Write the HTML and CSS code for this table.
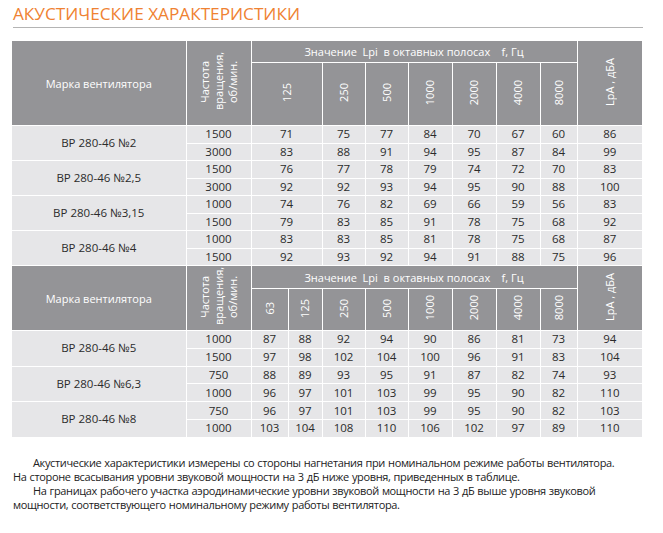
FILE: index.html
```html
<!DOCTYPE html>
<html lang="ru">
<head>
	<meta charset="UTF-8">
	<title>Акустические характеристики</title>
	<link rel="stylesheet" href="styles.css">
</head>
<body>
	<div id="main">
		<h1 class="title">АКУСТИЧЕСКИЕ ХАРАКТЕРИСТИКИ</h1>

		<table class="spec">
			<colgroup>
				<col style="width:174px"><col style="width:65px"><col style="width:71px">
				<col style="width:43px"><col style="width:43px"><col style="width:44px">
				<col style="width:44px"><col style="width:44px"><col style="width:37px"><col style="width:65px">
			</colgroup>
			<thead>
				<tr class="h1">
					<th rowspan="2">Марка вентилятора</th>
					<th rowspan="2"><div class="vert multi">Частота вращения, об/мин.</div></th>
					<th colspan="7">Значение&nbsp; Lpi&nbsp; в октавных полосах &nbsp;&nbsp; f, Гц</th>
					<th rowspan="2"><div class="vert">LpA , дБА</div></th>
				</tr>
				<tr class="h2">
					<th><div class="vert">125</div></th>
					<th><div class="vert">250</div></th>
					<th><div class="vert">500</div></th>
					<th><div class="vert">1000</div></th>
					<th><div class="vert">2000</div></th>
					<th><div class="vert">4000</div></th>
					<th><div class="vert">8000</div></th>
				</tr>
			</thead>
			<tbody>
				<tr><td rowspan="2">ВР 280-46 №2</td><td>1500</td><td>71</td><td>75</td><td>77</td><td>84</td><td>70</td><td>67</td><td>60</td><td>86</td></tr>
				<tr><td>3000</td><td>83</td><td>88</td><td>91</td><td>94</td><td>95</td><td>87</td><td>84</td><td>99</td></tr>
				<tr><td rowspan="2">ВР 280-46 №2,5</td><td>1500</td><td>76</td><td>77</td><td>78</td><td>79</td><td>74</td><td>72</td><td>70</td><td>83</td></tr>
				<tr><td>3000</td><td>92</td><td>92</td><td>93</td><td>94</td><td>95</td><td>90</td><td>88</td><td>100</td></tr>
				<tr><td rowspan="2">ВР 280-46 №3,15</td><td>1000</td><td>74</td><td>76</td><td>82</td><td>69</td><td>66</td><td>59</td><td>56</td><td>83</td></tr>
				<tr><td>1500</td><td>79</td><td>83</td><td>85</td><td>91</td><td>78</td><td>75</td><td>68</td><td>92</td></tr>
				<tr><td rowspan="2">ВР 280-46 №4</td><td>1000</td><td>83</td><td>83</td><td>85</td><td>81</td><td>78</td><td>75</td><td>68</td><td>87</td></tr>
				<tr><td>1500</td><td>92</td><td>93</td><td>92</td><td>94</td><td>91</td><td>88</td><td>75</td><td>96</td></tr>
			</tbody>
		</table>

		<table class="spec second">
			<colgroup>
				<col style="width:174px"><col style="width:65px"><col style="width:37px"><col style="width:34px">
				<col style="width:43px"><col style="width:43px"><col style="width:44px">
				<col style="width:44px"><col style="width:44px"><col style="width:37px"><col style="width:65px">
			</colgroup>
			<thead>
				<tr class="h1">
					<th rowspan="2">Марка вентилятора</th>
					<th rowspan="2"><div class="vert multi">Частота вращения, об/мин.</div></th>
					<th colspan="8">Значение&nbsp; Lpi&nbsp; в октавных полосах &nbsp;&nbsp; f, Гц</th>
					<th rowspan="2"><div class="vert">LpA , дБА</div></th>
				</tr>
				<tr class="h2">
					<th><div class="vert">63</div></th>
					<th><div class="vert">125</div></th>
					<th><div class="vert">250</div></th>
					<th><div class="vert">500</div></th>
					<th><div class="vert">1000</div></th>
					<th><div class="vert">2000</div></th>
					<th><div class="vert">4000</div></th>
					<th><div class="vert">8000</div></th>
				</tr>
			</thead>
			<tbody>
				<tr><td rowspan="2">ВР 280-46 №5</td><td>1000</td><td>87</td><td>88</td><td>92</td><td>94</td><td>90</td><td>86</td><td>81</td><td>73</td><td>94</td></tr>
				<tr><td>1500</td><td>97</td><td>98</td><td>102</td><td>104</td><td>100</td><td>96</td><td>91</td><td>83</td><td>104</td></tr>
				<tr><td rowspan="2">ВР 280-46 №6,3</td><td>750</td><td>88</td><td>89</td><td>93</td><td>95</td><td>91</td><td>87</td><td>82</td><td>74</td><td>93</td></tr>
				<tr><td>1000</td><td>96</td><td>97</td><td>101</td><td>103</td><td>99</td><td>95</td><td>90</td><td>82</td><td>110</td></tr>
				<tr><td rowspan="2">ВР 280-46 №8</td><td>750</td><td>96</td><td>97</td><td>101</td><td>103</td><td>99</td><td>95</td><td>90</td><td>82</td><td>103</td></tr>
				<tr><td>1000</td><td>103</td><td>104</td><td>108</td><td>110</td><td>106</td><td>102</td><td>97</td><td>89</td><td>110</td></tr>
			</tbody>
		</table>

		<div class="notes">
			<p class="indent">Акустические характеристики измерены со стороны нагнетания при номинальном режиме работы вентилятора.<br>На стороне всасывания уровни звуковой мощности на 3 дБ ниже уровня, приведенных в таблице.</p>
			<p class="indent">На границах рабочего участка аэродинамические уровни звуковой мощности на 3 дБ выше уровня звуковой мощности, соответствующего номинальному режиму работы вентилятора.</p>
		</div>
	</div>
</body>
</html>
```

FILE: styles.css
```css
*{
	margin: 0;
	padding: 0;
}
body{
	background-color: #fff;
	font-family: "Open Sans", "Noto Sans", sans-serif;
	color: #2b2b2b;
}
#main{
	width: 631px;
	padding: 3px 0 0 12px;
}
.title{
	margin-left: 1px;
	padding-bottom: 2px;
	border-bottom: 1px solid #b4b4b4;
	font-size: 17.2px;
	font-weight: normal;
	line-height: 22px;
	color: #ef8232;
	letter-spacing: 0;
}
.spec{
	width: 630px;
	margin-top: 13px;
	border-collapse: collapse;
	table-layout: fixed;
	font-size: 11.5px;
}
.spec.second{
	margin-top: 0;
	border-bottom: 1px solid #9a9a9c;
}
.spec th{
	background-color: #949497;
	color: #fff;
	font-weight: normal;
	font-size: 11px;
	border: 1px solid #fff;
	text-align: center;
	vertical-align: middle;
	padding: 0;
}
.spec tr.h1 th{
	height: 21px;
}
.spec tr.h2 th{
	height: 62px;
}
.spec.second tr.h1 th{
	height: 22px;
}
.spec.second tr.h2 th{
	height: 41px;
}
.spec td{
	background-color: #e6e6e8;
	border: 1px solid #fff;
	text-align: center;
	vertical-align: middle;
	height: 16.5px;
	line-height: 14px;
	padding: 0;
}
.spec.second td{
	height: 16.8px;
}
.spec thead tr:first-child th{
	border-top: none;
}
.spec th:first-child,
.spec td:first-child{
	border-left: none;
}
.spec tr > :last-child{
	border-right: none;
}
.vert{
	display: inline-block;
	writing-mode: vertical-rl;
	transform: rotate(180deg);
	line-height: 14px;
	white-space: nowrap;
}
.vert.multi{
	white-space: normal;
	height: 56px;
	text-align: center;
}
.notes{
	margin-top: 18px;
	margin-left: 1px;
	font-size: 11px;
	line-height: 14px;
	letter-spacing: -0.35px;
	word-spacing: 0.5px;
	color: #222;
}
.indent{
	text-indent: 20px;
}
```
